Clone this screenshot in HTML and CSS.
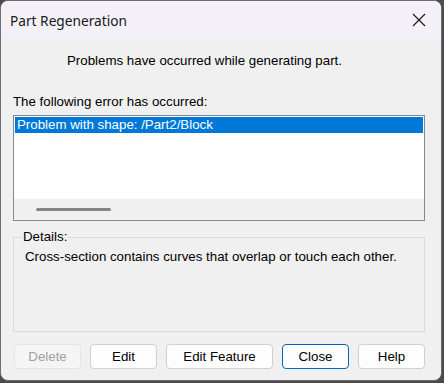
FILE: index.html
```html
<!DOCTYPE html>
<html lang="en">
<head>
    <meta charset="UTF-8">
    <title>Part Regeneration</title>
    <link rel="stylesheet" href="styles.css">
</head>
<body>
<div class="dialog">
    <div class="title-bar">
        <span class="title">Part Regeneration</span>
        <svg class="close-x" width="14" height="14" viewBox="0 0 14 14">
            <path d="M1 1 L13 13 M13 1 L1 13" stroke="#1a1a1a" stroke-width="1.2" fill="none"/>
        </svg>
    </div>
    <div class="content">
        <p class="message">Problems have occurred while generating part.</p>
        <p class="list-label">The following error has occurred:</p>
        <div class="error-list">
            <div class="rows">
                <div class="row selected">Problem with shape: /Part2/Block</div>
            </div>
            <div class="hscroll"><div class="thumb"></div></div>
        </div>
        <fieldset class="details">
            <legend>Details:</legend>
            <p>Cross-section contains curves that overlap or touch each other.</p>
        </fieldset>
        <div class="buttons">
            <button class="btn" disabled>Delete</button>
            <button class="btn">Edit</button>
            <button class="btn wide">Edit Feature</button>
            <button class="btn default">Close</button>
            <button class="btn">Help</button>
        </div>
    </div>
</div>
</body>
</html>
```

FILE: styles.css
```css
body {
    margin: 0;
    background: #4b4b4d;
    font-family: 'Liberation Sans', Arial, sans-serif;
    font-size: 13.3px;
    color: #000;
}

.dialog {
    width: 440px;
    height: 379px;
    border: 1px solid #6d6d70;
    border-radius: 8px;
    overflow: hidden;
    background: #f0f0f0;
}

.title-bar {
    height: 38px;
    background: #f3f0f7;
    display: flex;
    align-items: center;
    justify-content: space-between;
    padding: 0 15px 0 9px;
}

.title {
    font-family: 'Noto Sans', sans-serif;
    font-size: 13.7px;
    color: #1a1a1a;
}

.content {
    padding: 0 0 0 12px;
}

.message {
    margin: 14px 0 0 54px;
    line-height: 16px;
}

.list-label {
    margin: 25px 0 0 0;
    line-height: 16px;
}

.error-list {
    margin-top: 5px;
    width: 410px;
    height: 104px;
    border: 1px solid #828790;
    background: #fff;
    display: flex;
    flex-direction: column;
}

.rows {
    flex: 1;
    padding: 1px;
}

.row {
    height: 16px;
    line-height: 16px;
    padding-left: 2px;
}

.row.selected {
    background: #0078d7;
    color: #fff;
}

.hscroll {
    height: 21px;
    background: #f0f0f0;
    display: flex;
    align-items: center;
}

.thumb {
    margin-left: 22px;
    width: 75px;
    height: 3px;
    border-radius: 2px;
    background: #858585;
}

.details {
    margin: 9px 0 0 0;
    width: 412px;
    height: 102px;
    box-sizing: border-box;
    border: 1px solid #dadada;
    padding: 0 0 0 11px;
}

.details legend {
    margin-left: -3px;
    padding: 0 1px;
    line-height: 14px;
}

.details p {
    margin: 5px 0 0 0;
    line-height: 16px;
}

.buttons {
    margin: 12px 0 0 1px;
    display: flex;
    gap: 9px;
}

.btn {
    width: 67px;
    height: 25px;
    font-family: 'Liberation Sans', Arial, sans-serif;
    font-size: 13.3px;
    color: #000;
    background: #fdfdfd;
    border: 1px solid #d0d0d0;
    border-radius: 4px;
    padding: 0;
}

.btn.wide {
    width: 107px;
}

.btn.default {
    border-color: #0067c0;
}

.btn:disabled {
    background: #f5f5f5;
    border-color: #e5e5e5;
    color: #a0a0a0;
}
```
